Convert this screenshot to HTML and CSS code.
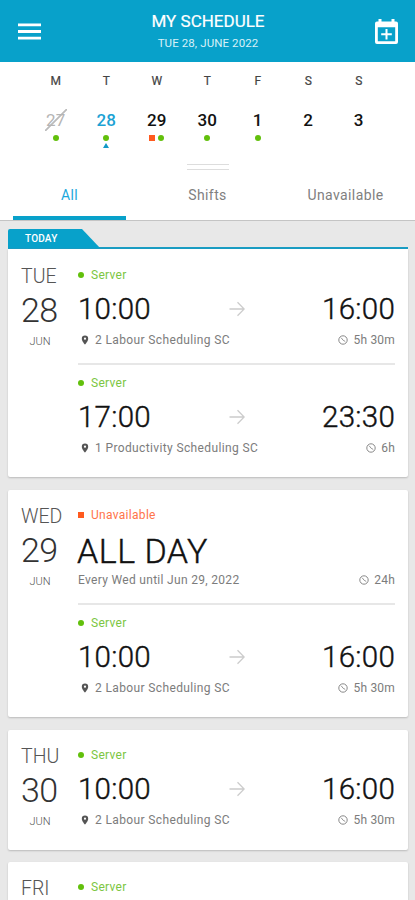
FILE: index.html
```html
<!DOCTYPE html>
<html lang="en">
<head>
<meta charset="UTF-8" />
<meta name="viewport" content="width=device-width, initial-scale=1.0"/>
<title>My Schedule</title>
<link rel="stylesheet" href="styles.css">
</head>
<body>

<!-- shared icons -->
<svg class="sprite" aria-hidden="true">
  <symbol id="arrow" viewBox="0 0 16 16"><path d="M0.5 8H15M8.5 1.2L15.2 8L8.5 14.8" fill="none" stroke="currentColor" stroke-width="1.3"/></symbol>
  <symbol id="pin" viewBox="0 0 8 10"><path fill-rule="evenodd" d="M4 .5A3.2 3.2 0 0 0 .8 3.7C.8 6 4 9.6 4 9.6S7.2 6 7.2 3.7A3.2 3.2 0 0 0 4 .5ZM4 2.6A1.1 1.1 0 1 1 4 4.8A1.1 1.1 0 1 1 4 2.6Z" fill="currentColor"/></symbol>
  <symbol id="clock" viewBox="0 0 10 10"><circle cx="5" cy="5" r="4.2" fill="none" stroke="currentColor"/><path d="M3.2 2.8L5.2 5.3L7.2 6.4" fill="none" stroke="currentColor" stroke-width=".9"/></symbol>
</svg>

<header class="topbar">
  <svg class="menu" viewBox="0 0 23 17"><path d="M0 1.8H23M0 8.5H23M0 15.2H23" stroke="#fff" stroke-width="2.8"/></svg>
  <div class="titles">
    <h1>MY SCHEDULE</h1>
    <p>TUE 28, JUNE 2022</p>
  </div>
  <svg class="add" viewBox="0 0 23 25"><path fill="#fff" fill-rule="evenodd" d="M3.5 0H6.5V2.5H16.5V0H19.5V2.5H21Q23 2.5 23 4.5V23Q23 25 21 25H2Q0 25 0 23V4.5Q0 2.5 2 2.5H3.5ZM2.8 8.3V22.2H20.2V8.3Z"/><path d="M11.5 10V20.6M6.2 15.3H16.8" stroke="#fff" stroke-width="2"/></svg>
</header>

<section class="week">
  <div class="day"><span class="name">M</span><span class="num past">27</span><span class="marks"><i class="dot"></i></span></div>
  <div class="day"><span class="name">T</span><span class="num current">28</span><span class="marks"><i class="dot"></i></span><span class="pointer"></span></div>
  <div class="day"><span class="name">W</span><span class="num">29</span><span class="marks"><i class="square"></i><i class="dot"></i></span></div>
  <div class="day"><span class="name">T</span><span class="num">30</span><span class="marks"><i class="dot"></i></span></div>
  <div class="day"><span class="name">F</span><span class="num">1</span><span class="marks"><i class="dot"></i></span></div>
  <div class="day"><span class="name">S</span><span class="num">2</span></div>
  <div class="day"><span class="name">S</span><span class="num">3</span></div>
</section>
<div class="handle"></div>

<nav class="tabs">
  <a class="tab active">All</a>
  <a class="tab">Shifts</a>
  <a class="tab">Unavailable</a>
</nav>

<main class="list">
  <div class="today"><span>TODAY</span></div>
  <article class="card first">
    <div class="date"><span class="weekday">TUE</span><span class="number">28</span><span class="month">JUN</span></div>
    <div class="entries">
      <div class="entry">
        <div class="label"><i class="dot"></i>Server</div>
        <div class="times"><span>10:00</span><svg class="arrow"><use href="#arrow"/></svg><span>16:00</span></div>
        <div class="meta"><span class="place"><svg class="pin"><use href="#pin"/></svg>2 Labour Scheduling SC</span><span class="length"><svg class="clock"><use href="#clock"/></svg>5h 30m</span></div>
      </div>
      <div class="entry">
        <div class="label"><i class="dot"></i>Server</div>
        <div class="times"><span>17:00</span><svg class="arrow"><use href="#arrow"/></svg><span>23:30</span></div>
        <div class="meta"><span class="place"><svg class="pin"><use href="#pin"/></svg>1 Productivity Scheduling SC</span><span class="length"><svg class="clock"><use href="#clock"/></svg>6h</span></div>
      </div>
    </div>
  </article>

  <article class="card">
    <div class="date"><span class="weekday">WED</span><span class="number">29</span><span class="month">JUN</span></div>
    <div class="entries">
      <div class="entry">
        <div class="label unavailable"><i class="square"></i>Unavailable</div>
        <div class="times all-day"><span>ALL DAY</span></div>
        <div class="meta"><span class="repeat">Every Wed until Jun 29, 2022</span><span class="length"><svg class="clock"><use href="#clock"/></svg>24h</span></div>
      </div>
      <div class="entry">
        <div class="label"><i class="dot"></i>Server</div>
        <div class="times"><span>10:00</span><svg class="arrow"><use href="#arrow"/></svg><span>16:00</span></div>
        <div class="meta"><span class="place"><svg class="pin"><use href="#pin"/></svg>2 Labour Scheduling SC</span><span class="length"><svg class="clock"><use href="#clock"/></svg>5h 30m</span></div>
      </div>
    </div>
  </article>

  <article class="card short">
    <div class="date"><span class="weekday">THU</span><span class="number">30</span><span class="month">JUN</span></div>
    <div class="entries">
      <div class="entry">
        <div class="label"><i class="dot"></i>Server</div>
        <div class="times"><span>10:00</span><svg class="arrow"><use href="#arrow"/></svg><span>16:00</span></div>
        <div class="meta"><span class="place"><svg class="pin"><use href="#pin"/></svg>2 Labour Scheduling SC</span><span class="length"><svg class="clock"><use href="#clock"/></svg>5h 30m</span></div>
      </div>
    </div>
  </article>

  <article class="card last">
    <div class="date"><span class="weekday">FRI</span></div>
    <div class="entries">
      <div class="entry">
        <div class="label"><i class="dot"></i>Server</div>
      </div>
    </div>
  </article>
</main>

</body>
</html>
```

FILE: styles.css
```css
* {
  box-sizing: border-box;
}

body {
  margin: 0;
  height: 900px;
  overflow: hidden;
  background: #e8e8e8;
  color: #111;
  font-family: Roboto, sans-serif;
  display: flex;
  flex-direction: column;
}

svg {
  display: block;
  flex: none;
}

.sprite {
  position: absolute;
  width: 0;
  height: 0;
}

.topbar {
  flex: none;
  height: 62px;
  padding: 0 17px 0 18px;
  background: #08a1ca;
  color: #fff;
  display: flex;
  align-items: center;
  justify-content: space-between;
}

.menu {
  width: 23px;
  height: 17px;
}

.add {
  width: 23px;
  height: 25px;
}

.titles {
  padding-bottom: 2px;
  text-align: center;
}

.titles h1 {
  margin: 0;
  font-size: 17px;
  font-weight: 400;
  line-height: 22px;
  -webkit-text-stroke: 0.2px #fff;
}

.titles p {
  margin: 3px 0 0;
  font-size: 11.5px;
  line-height: 16px;
  letter-spacing: 0.1px;
  color: #d8f1f8;
}

.week {
  flex: none;
  height: 98px;
  padding: 10px 31px 0 30.5px;
  background: #fff;
  display: grid;
  grid-template-columns: repeat(7, 1fr);
}

.day {
  display: flex;
  flex-direction: column;
  align-items: center;
}

.name {
  font-size: 12px;
  line-height: 18px;
  font-weight: 400;
  color: #444;
  -webkit-text-stroke: 0.2px #444;
}

.num {
  margin-top: 19px;
  font-size: 17px;
  line-height: 22px;
  font-weight: 500;
  letter-spacing: 0.2px;
}

.past {
  padding: 0 1px;
  font-weight: 400;
  color: #b5b5b5;
  background: linear-gradient(to bottom right, transparent 47%, #bbb 48%, #bbb 52%, transparent 53%);
}

.current {
  color: #1ba2d4;
}

.marks {
  margin-top: 4px;
  display: flex;
  gap: 3px;
}

.dot,
.square {
  display: block;
  width: 6px;
  height: 6px;
  background: #62c00c;
}

.dot {
  border-radius: 50%;
}

.square {
  background: #ff5a1f;
}

.pointer {
  margin-top: 2px;
  border: 3.5px solid transparent;
  border-top: 0;
  border-bottom: 5px solid #1399c6;
}

.handle {
  flex: none;
  height: 10px;
  background: #fff;
  display: flex;
  align-items: flex-end;
  justify-content: center;
}

.handle::before {
  content: "";
  width: 42px;
  height: 4px;
  border: solid #ddd;
  border-width: 1px 0;
}

.tabs {
  flex: none;
  height: 51px;
  padding: 0 13px;
  background: #fff;
  border-bottom: 1px solid #c4c4c4;
  display: grid;
  grid-template-columns: 113px 1fr 113px;
  column-gap: 25px;
}

.tab {
  padding-top: 15px;
  text-align: center;
  font-size: 14px;
  line-height: 20px;
  letter-spacing: 0.4px;
  color: #808080;
}

.active {
  color: #1ba8dc;
  border-bottom: 4px solid #08a1ca;
}

.list {
  padding: 8px 7px 0 8px;
}

.today {
  height: 20px;
  border-bottom: 2px solid #1a9dc3;
}

.today span {
  display: block;
  width: 92px;
  padding-left: 17px;
  background: #08a1ca;
  clip-path: polygon(0 0, 74px 0, 100% 100%, 0 100%);
  border-top-left-radius: 2px;
  color: #fff;
  font-size: 10px;
  font-weight: 500;
  line-height: 19px;
  letter-spacing: 0.2px;
}

.card {
  height: 227px;
  margin-bottom: 13px;
  padding: 17px 13px 0;
  background: #fff;
  border-radius: 2px;
  box-shadow: 0 1px 2px rgba(0, 0, 0, 0.2);
  display: flex;
}

.first {
  height: 228px;
  padding-top: 18px;
  border-radius: 0 0 2px 2px;
}

.short {
  height: 120px;
  margin-bottom: 12px;
}

/* runs off the bottom of the screen */
.last {
  height: 38px;
  margin-bottom: 0;
  border-radius: 2px 2px 0 0;
}

.date {
  width: 57px;
  display: flex;
  flex-direction: column;
  white-space: nowrap;
  font-weight: 300;
  color: #555;
}

.weekday {
  font-size: 19.5px;
  line-height: 19px;
}

.number {
  margin-top: 5px;
  font-size: 34px;
  line-height: 38px;
  letter-spacing: -0.5px;
  color: #333;
}

.month {
  width: 38px;
  margin-top: 5px;
  text-align: center;
  font-size: 11px;
  line-height: 16px;
}

.entries {
  flex: 1;
}

.entry + .entry {
  margin-top: 15px;
  padding-top: 10px;
  border-top: 2px solid #e7e7e7;
}

.label {
  display: flex;
  align-items: center;
  gap: 7px;
  font-size: 12px;
  line-height: 16px;
  letter-spacing: 0.3px;
  color: #7cc642;
}

.unavailable {
  color: #ff744a;
}

.times {
  height: 34px;
  margin-top: 9px;
  display: flex;
  align-items: center;
  justify-content: space-between;
  font-size: 29.5px;
  font-weight: 300;
  line-height: 34px;
  letter-spacing: 0.25px;
  -webkit-text-stroke: 0.4px #111;
}

.all-day {
  margin-left: -1px;
  padding-top: 3px;
  font-size: 34px;
  letter-spacing: 0.5px;
}

.arrow {
  width: 16px;
  height: 16px;
  color: #ccc;
}

.meta {
  margin-top: 6px;
  display: flex;
  justify-content: space-between;
  font-size: 12px;
  line-height: 16px;
  color: #7c7c7c;
}

.place,
.length {
  display: flex;
  align-items: center;
}

.place {
  padding-left: 3px;
  gap: 6px;
  letter-spacing: 0.37px;
}

.repeat {
  letter-spacing: 0.31px;
}

.pin {
  width: 8px;
  height: 10px;
  color: #555;
}

.length {
  gap: 5px;
  letter-spacing: 0.2px;
}

.clock {
  width: 10px;
  height: 10px;
  color: #888;
}
```
